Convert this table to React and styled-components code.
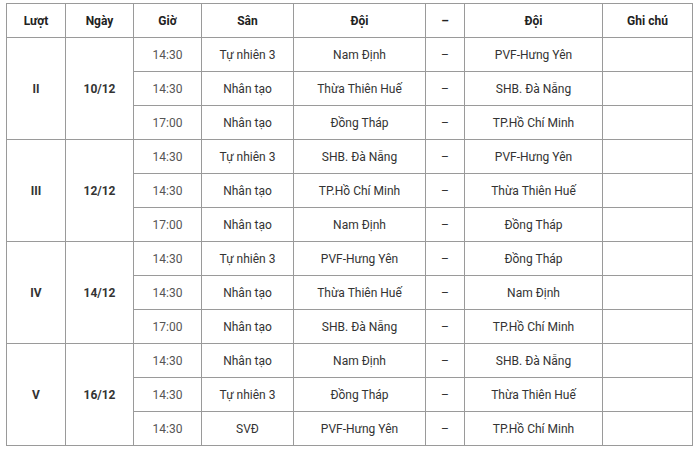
import React from 'react'
import styled, { createGlobalStyle } from 'styled-components'

const GlobalStyle = createGlobalStyle`
  html, body {
    margin: 0;
    padding: 0;
    background: #fff;
  }
  body {
    font-family: Roboto, "Noto Sans", Arial, sans-serif;
    color: #333;
  }
`

const Wrapper = styled.div`
  padding: 3px 0 0 6px;
`

const Table = styled.table`
  width: 686px;
  table-layout: fixed;
  border-collapse: collapse;
  font-size: 12px;
`

const HeadCell = styled.th`
  height: 33px;
  padding: 0 4px;
  border: 1px solid #9a9a9a;
  font-weight: 700;
  color: #222;
  text-align: center;
`

const Cell = styled.td`
  height: 33px;
  padding: 0 4px;
  border: 1px solid #9a9a9a;
  text-align: center;
  font-weight: ${(p) => (p.$bold ? 700 : 400)};
  color: ${(p) => (p.$muted ? '#555' : '#333')};
`

const columns = [59, 68, 68, 92, 132, 39, 138, 90]
const headers = ['Lượt', 'Ngày', 'Giờ', 'Sân', 'Đội', '–', 'Đội', 'Ghi chú']

const rounds = [
  {
    round: 'II',
    date: '10/12',
    matches: [
      ['14:30', 'Tự nhiên 3', 'Nam Định', 'PVF-Hưng Yên'],
      ['14:30', 'Nhân tạo', 'Thừa Thiên Huế', 'SHB. Đà Nẵng'],
      ['17:00', 'Nhân tạo', 'Đồng Tháp', 'TP.Hồ Chí Minh'],
    ],
  },
  {
    round: 'III',
    date: '12/12',
    matches: [
      ['14:30', 'Tự nhiên 3', 'SHB. Đà Nẵng', 'PVF-Hưng Yên'],
      ['14:30', 'Nhân tạo', 'TP.Hồ Chí Minh', 'Thừa Thiên Huế'],
      ['17:00', 'Nhân tạo', 'Nam Định', 'Đồng Tháp'],
    ],
  },
  {
    round: 'IV',
    date: '14/12',
    matches: [
      ['14:30', 'Tự nhiên 3', 'PVF-Hưng Yên', 'Đồng Tháp'],
      ['14:30', 'Nhân tạo', 'Thừa Thiên Huế', 'Nam Định'],
      ['17:00', 'Nhân tạo', 'SHB. Đà Nẵng', 'TP.Hồ Chí Minh'],
    ],
  },
  {
    round: 'V',
    date: '16/12',
    matches: [
      ['14:30', 'Nhân tạo', 'Nam Định', 'SHB. Đà Nẵng'],
      ['14:30', 'Tự nhiên 3', 'Đồng Tháp', 'Thừa Thiên Huế'],
      ['14:30', 'SVĐ', 'PVF-Hưng Yên', 'TP.Hồ Chí Minh'],
    ],
  },
]

const App = () => {
  return (
    <Wrapper>
      <GlobalStyle />
      <Table>
        <colgroup>
          {columns.map((w, i) => (
            <col key={i} style={{ width: w }} />
          ))}
        </colgroup>
        <thead>
          <tr>
            {headers.map((h, i) => (
              <HeadCell key={i}>{h}</HeadCell>
            ))}
          </tr>
        </thead>
        <tbody>
          {rounds.map((r) =>
            r.matches.map(([time, field, home, away], i) => (
              <tr key={r.round + i}>
                {i === 0 && (
                  <>
                    <Cell rowSpan={3} $bold>
                      {r.round}
                    </Cell>
                    <Cell rowSpan={3} $bold>
                      {r.date}
                    </Cell>
                  </>
                )}
                <Cell $muted>{time}</Cell>
                <Cell>{field}</Cell>
                <Cell>{home}</Cell>
                <Cell>–</Cell>
                <Cell>{away}</Cell>
                <Cell />
              </tr>
            ))
          )}
        </tbody>
      </Table>
    </Wrapper>
  )
}

export default App
